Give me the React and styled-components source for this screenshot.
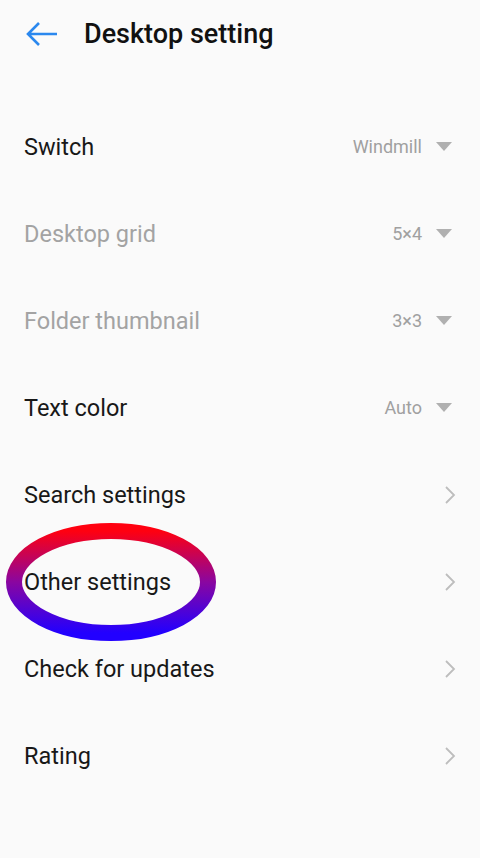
import React from "react";
import styled, { createGlobalStyle } from "styled-components";

const Global = createGlobalStyle`
  html, body { margin: 0; padding: 0; background: #fafafa; }
  body { font-family: Roboto, "Noto Sans", sans-serif; }
`;

const Page = styled.div`
  width: 480px;
  height: 858px;
  background: #fafafa;
  position: relative;
  overflow: hidden;
`;

const Header = styled.header`
  height: 68px;
  display: flex;
  align-items: center;
  padding-left: 26px;
  gap: 26px;
`;

const BackButton = styled.button`
  border: 0;
  background: none;
  padding: 0;
  width: 32px;
  height: 32px;
  display: flex;
  align-items: center;
  justify-content: center;
`;

const Title = styled.h1`
  margin: 0;
  font-size: 27px;
  font-weight: 500;
  color: #111;
`;

const List = styled.ul`
  list-style: none;
  margin: 35px 0 0;
  padding: 0;
`;

const Row = styled.li`
  height: 87px;
  display: flex;
  align-items: center;
  justify-content: space-between;
  padding: 0 24px;
`;

const Label = styled.span`
  font-size: 23.5px;
  color: ${(p) => (p.$disabled ? "#a3a3a3" : "#181818")};
`;

const Right = styled.span`
  display: flex;
  align-items: center;
  gap: 14px;
  margin-right: ${(p) => (p.$chevron ? "0" : "4px")};
`;

const Value = styled.span`
  font-size: 18px;
  color: #a0a0a0;
`;

const Ring = styled.svg`
  position: absolute;
  left: 0;
  top: 515px;
`;

const Triangle = () => (
  <svg width="16" height="9" viewBox="0 0 16 9">
    <path d="M0 0 H16 L8 9 Z" fill="#b0b0b0" />
  </svg>
);

const Chevron = () => (
  <svg width="12" height="20" viewBox="0 0 12 20">
    <path d="M2 2 L10 10 L2 18" fill="none" stroke="#bdbdbd" strokeWidth="1.8" />
  </svg>
);

const rows = [
  { label: "Switch", value: "Windmill" },
  { label: "Desktop grid", value: "5×4", disabled: true },
  { label: "Folder thumbnail", value: "3×3", disabled: true },
  { label: "Text color", value: "Auto" },
  { label: "Search settings" },
  { label: "Other settings" },
  { label: "Check for updates" },
  { label: "Rating" },
];

export default function App() {
  return (
    <Page>
      <Global />
      <Header>
        <BackButton aria-label="Back">
          <svg width="32" height="26" viewBox="0 0 32 26">
            <path
              d="M31 13 H3 M13 2 L2 13 L13 24"
              fill="none"
              stroke="#2b88ee"
              strokeWidth="2.6"
            />
          </svg>
        </BackButton>
        <Title>Desktop setting</Title>
      </Header>
      <List>
        {rows.map((r) => (
          <Row key={r.label}>
            <Label $disabled={r.disabled}>{r.label}</Label>
            {r.value ? (
              <Right>
                <Value>{r.value}</Value>
                <Triangle />
              </Right>
            ) : (
              <Right $chevron>
                <Chevron />
              </Right>
            )}
          </Row>
        ))}
      </List>
      <Ring width="230" height="135" viewBox="0 515 230 135">
        <defs>
          <linearGradient id="ringGrad" x1="0" y1="0" x2="0" y2="1">
            <stop offset="0" stopColor="#ff0010" />
            <stop offset="0.5" stopColor="#8a06a0" />
            <stop offset="1" stopColor="#2200ff" />
          </linearGradient>
        </defs>
        <ellipse cx="111" cy="582" rx="97" ry="51" fill="none" stroke="url(#ringGrad)" strokeWidth="16" />
      </Ring>
    </Page>
  );
}
